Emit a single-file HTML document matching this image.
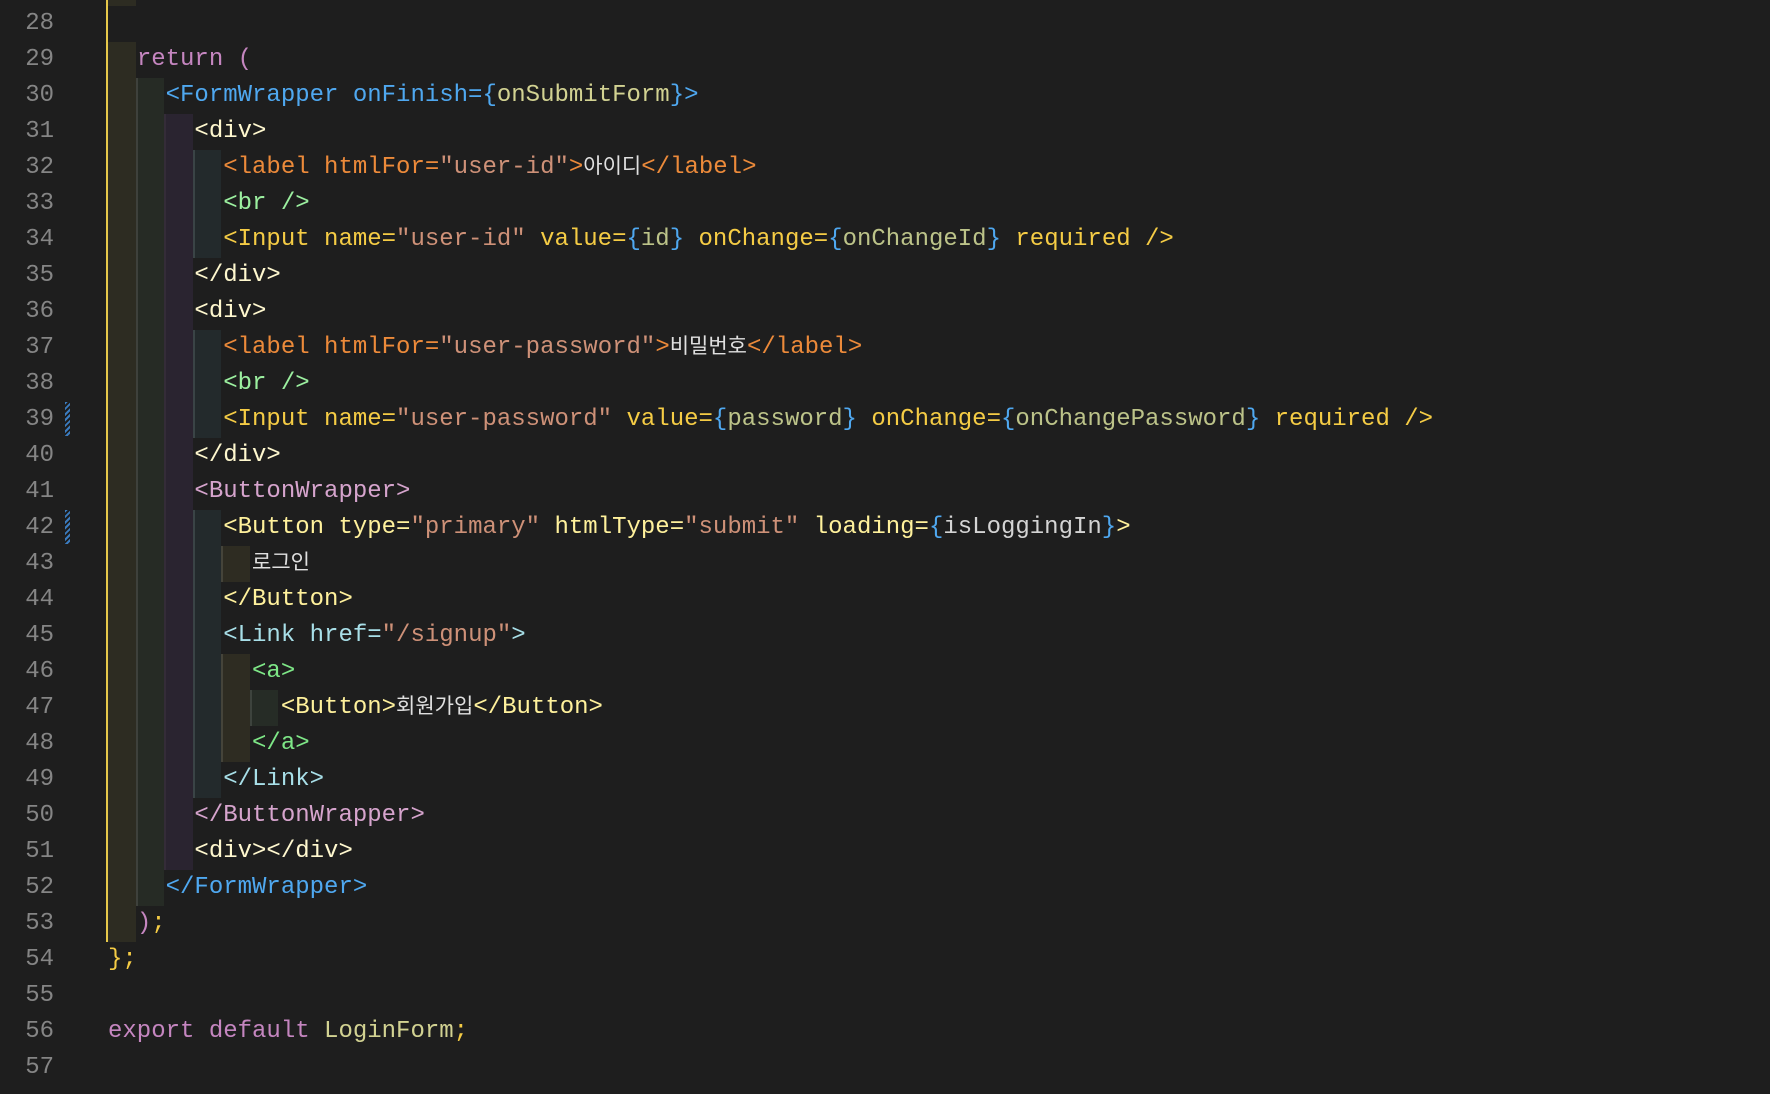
<!DOCTYPE html>
<html><head><meta charset="utf-8"><style>
html,body{margin:0;padding:0;background:#1e1e1e;width:1770px;height:1094px;overflow:hidden}
.r{position:absolute;left:0;height:36px;line-height:36px;white-space:pre;font-family:"Liberation Mono","Noto Sans CJK KR",monospace;font-size:24px;color:#d4d4d4}
.n{position:absolute;left:0;width:54px;text-align:right;color:#858585}
.t{position:absolute;left:108px}
.b{position:absolute;height:36px}
.k{font-family:"Noto Sans CJK KR","Liberation Sans",sans-serif;font-size:21px;color:#e0e0e0;line-height:0}
.pu{color:#c586c0}.fw{color:#4fa8f0}.dv{color:#fff8cf}.lb{color:#ec8a3a}.st{color:#ce9178}.br{color:#9cf0a0}
.in{color:#f5cc45}.br2{color:#4fa8f0}.vl{color:#bcc389}.bw{color:#d6a4cd}.bt{color:#fff19c}.lk{color:#a8dfe8}.an{color:#7ee787}.gy{color:#d4d4d4}.yl{color:#f5cc45}.lf{color:#d2d292}
</style></head><body>
<div id="bands"></div>
<div style="position:absolute;left:106px;top:0;width:2px;height:942px;background:#e6c84a"></div>
<div style="position:absolute;left:65px;top:402px;width:5px;height:34px;background:repeating-linear-gradient(135deg,#3a7bbf 0 2px,transparent 2px 4px)"></div>
<div style="position:absolute;left:65px;top:510px;width:5px;height:34px;background:repeating-linear-gradient(135deg,#3a7bbf 0 2px,transparent 2px 4px)"></div>
<script>
var B=document.getElementById('bands'),h='';
function band(x,w,c,bd,lines){lines.forEach(function(n){var top=6+(n-28)*36;h+='<div class="b" style="left:'+x+'px;width:'+w+'px;top:'+top+'px;background:'+c+(bd?';border-left:2px solid '+bd+';box-sizing:border-box':'')+'"></div>';});}
function rng(a,b){var r=[];for(var i=a;i<=b;i++)r.push(i);return r;}
band(108,28,'#2d2c22',null,[27].concat(rng(29,53)));
band(136,28,'#262b25','#3e413c',rng(30,52));
band(164,29,'#2a2430','#342c38',rng(31,51));
band(193,28,'#232a2c','#3a4446',[32,33,34,37,38,39].concat(rng(42,49)));
band(221,29,'#2e2c22','#45443a',[43,46,47,48]);
band(250,28,'#262c26','#3d433d',[47]);
B.innerHTML=h;
</script>
<div class="r" style="top:6px"><span class="n">28</span></div>
<div class="r" style="top:42px"><span class="n">29</span><span class="t">  <span class="pu">return (</span></span></div>
<div class="r" style="top:78px"><span class="n">30</span><span class="t">    <span class="fw">&lt;FormWrapper onFinish={</span><span class="lf">onSubmitForm</span><span class="fw">}&gt;</span></span></div>
<div class="r" style="top:114px"><span class="n">31</span><span class="t">      <span class="dv">&lt;div&gt;</span></span></div>
<div class="r" style="top:150px"><span class="n">32</span><span class="t">        <span class="lb">&lt;label htmlFor=</span><span class="st">"user-id"</span><span class="lb">&gt;</span><span class="k">아이디</span><span class="lb">&lt;/label&gt;</span></span></div>
<div class="r" style="top:186px"><span class="n">33</span><span class="t">        <span class="br">&lt;br /&gt;</span></span></div>
<div class="r" style="top:222px"><span class="n">34</span><span class="t">        <span class="in">&lt;Input name=</span><span class="st">"user-id"</span><span class="in"> value=</span><span class="br2">{</span><span class="vl">id</span><span class="br2">}</span><span class="in"> onChange=</span><span class="br2">{</span><span class="vl">onChangeId</span><span class="br2">}</span><span class="in"> required /&gt;</span></span></div>
<div class="r" style="top:258px"><span class="n">35</span><span class="t">      <span class="dv">&lt;/div&gt;</span></span></div>
<div class="r" style="top:294px"><span class="n">36</span><span class="t">      <span class="dv">&lt;div&gt;</span></span></div>
<div class="r" style="top:330px"><span class="n">37</span><span class="t">        <span class="lb">&lt;label htmlFor=</span><span class="st">"user-password"</span><span class="lb">&gt;</span><span class="k">비밀번호</span><span class="lb">&lt;/label&gt;</span></span></div>
<div class="r" style="top:366px"><span class="n">38</span><span class="t">        <span class="br">&lt;br /&gt;</span></span></div>
<div class="r" style="top:402px"><span class="n">39</span><span class="t">        <span class="in">&lt;Input name=</span><span class="st">"user-password"</span><span class="in"> value=</span><span class="br2">{</span><span class="vl">password</span><span class="br2">}</span><span class="in"> onChange=</span><span class="br2">{</span><span class="vl">onChangePassword</span><span class="br2">}</span><span class="in"> required /&gt;</span></span></div>
<div class="r" style="top:438px"><span class="n">40</span><span class="t">      <span class="dv">&lt;/div&gt;</span></span></div>
<div class="r" style="top:474px"><span class="n">41</span><span class="t">      <span class="bw">&lt;ButtonWrapper&gt;</span></span></div>
<div class="r" style="top:510px"><span class="n">42</span><span class="t">        <span class="bt">&lt;Button type=</span><span class="st">"primary"</span><span class="bt"> htmlType=</span><span class="st">"submit"</span><span class="bt"> loading=</span><span class="br2">{</span><span class="gy">isLoggingIn</span><span class="br2">}</span><span class="bt">&gt;</span></span></div>
<div class="r" style="top:546px"><span class="n">43</span><span class="t">          <span class="k">로그인</span></span></div>
<div class="r" style="top:582px"><span class="n">44</span><span class="t">        <span class="bt">&lt;/Button&gt;</span></span></div>
<div class="r" style="top:618px"><span class="n">45</span><span class="t">        <span class="lk">&lt;Link href=</span><span class="st">"/signup"</span><span class="lk">&gt;</span></span></div>
<div class="r" style="top:654px"><span class="n">46</span><span class="t">          <span class="an">&lt;a&gt;</span></span></div>
<div class="r" style="top:690px"><span class="n">47</span><span class="t">            <span class="bt">&lt;Button&gt;</span><span class="k">회원가입</span><span class="bt">&lt;/Button&gt;</span></span></div>
<div class="r" style="top:726px"><span class="n">48</span><span class="t">          <span class="an">&lt;/a&gt;</span></span></div>
<div class="r" style="top:762px"><span class="n">49</span><span class="t">        <span class="lk">&lt;/Link&gt;</span></span></div>
<div class="r" style="top:798px"><span class="n">50</span><span class="t">      <span class="bw">&lt;/ButtonWrapper&gt;</span></span></div>
<div class="r" style="top:834px"><span class="n">51</span><span class="t">      <span class="dv">&lt;div&gt;&lt;/div&gt;</span></span></div>
<div class="r" style="top:870px"><span class="n">52</span><span class="t">    <span class="fw">&lt;/FormWrapper&gt;</span></span></div>
<div class="r" style="top:906px"><span class="n">53</span><span class="t">  <span class="pu">)</span><span class="yl">;</span></span></div>
<div class="r" style="top:942px"><span class="n">54</span><span class="t"><span class="yl">};</span></span></div>
<div class="r" style="top:978px"><span class="n">55</span></div>
<div class="r" style="top:1014px"><span class="n">56</span><span class="t"><span class="pu">export default </span><span class="lf">LoginForm</span><span class="yl">;</span></span></div>
<div class="r" style="top:1050px"><span class="n">57</span></div>
</body></html>
